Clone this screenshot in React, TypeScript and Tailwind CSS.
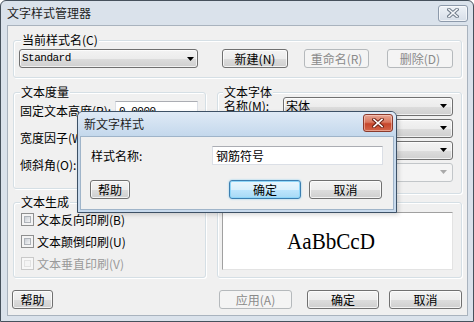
import React from "react";

type BtnProps = {
  children?: React.ReactNode;
  className?: string;
  disabled?: boolean;
  focused?: boolean;
};

function Btn({ children, className = "", disabled = false, focused = false }: BtnProps) {
  let tone =
    "border-[#707070] bg-[linear-gradient(#f3f3f3_0%,#ececec_50%,#dddddd_51%,#cfcfcf_100%)] text-black shadow-[inset_0_0_0_1px_rgba(255,255,255,0.75)]";
  if (disabled) tone = "border-[#b5b9bc] bg-[#f4f4f4] text-[#8a8a8a]";
  if (focused)
    tone =
      "border-[#3c7fb1] bg-[linear-gradient(#eaf6fd_0%,#d9f0fc_50%,#bee6fd_51%,#a7d9f5_100%)] text-black shadow-[inset_0_0_0_1px_#8fd6f8,0_0_2px_#7cc8f0]";
  return (
    <div
      className={`flex items-center justify-center rounded-[3px] border text-[12px] leading-none ${tone} ${className}`}
    >
      {children}
    </div>
  );
}

function Arrow({ disabled = false }: { disabled?: boolean }) {
  return (
    <svg width="7" height="4" viewBox="0 0 7 4" className="shrink-0">
      <path d="M0 0H7L3.5 4Z" fill={disabled ? "#a9a9a9" : "#000"} />
    </svg>
  );
}

type ComboProps = {
  text?: React.ReactNode;
  className?: string;
  disabled?: boolean;
  mono?: boolean;
};

function Combo({ text, className = "", disabled = false, mono = false }: ComboProps) {
  const tone = disabled
    ? "border-[#c2c6c9] bg-[#f4f4f4]"
    : "border-[#707070] bg-[linear-gradient(#f3f3f3_0%,#ececec_50%,#dddddd_51%,#cfcfcf_100%)] shadow-[inset_0_0_0_1px_rgba(255,255,255,0.7)]";
  return (
    <div
      className={`flex items-center justify-between rounded-[3px] border pl-[2px] ${tone} ${className}`}
    >
      <span
        className={
          mono
            ? "[font-family:'Liberation_Mono',monospace] text-[11px] tracking-[-0.5px] leading-none"
            : "leading-none"
        }
      >
        {text}
      </span>
      <Arrow disabled={disabled} />
    </div>
  );
}

function TextBox({ value = "", className = "", mono = false }: { value?: string; className?: string; mono?: boolean }) {
  return (
    <div
      className={`flex items-center bg-white border border-[#dbdfe6] border-t-[#abadb3] pl-[3px] ${className}`}
    >
      <span
        className={
          mono
            ? "[font-family:'Liberation_Mono',monospace] text-[11px] tracking-[-0.5px] leading-none"
            : "leading-none"
        }
      >
        {value}
      </span>
    </div>
  );
}

function Check({ disabled = false }: { disabled?: boolean }) {
  return (
    <div
      className={`w-[13px] h-[13px] shrink-0 border p-[2px] ${
        disabled ? "border-[#c9c9c9] bg-[#f7f7f7]" : "border-[#8e8f8f] bg-[#f4f4f4]"
      }`}
    >
      <div
        className={`w-full h-full border ${
          disabled
            ? "border-[#e2e2e2] bg-[#f4f4f4]"
            : "border-[#aeb3b9] bg-[linear-gradient(135deg,#c9ced4,#f4f5f6)]"
        }`}
      />
    </div>
  );
}

type GroupProps = {
  label?: string;
  labelPos?: string;
  className?: string;
  children?: React.ReactNode;
};

function Group({ label, labelPos = "left-[6px]", className = "", children }: GroupProps) {
  return (
    <div
      className={`relative rounded-[3px] border border-[#d5dfe5] shadow-[inset_1px_1px_0_#ffffff,1px_1px_0_#ffffff] ${className}`}
    >
      {label && (
        <span className={`absolute -top-[8px] ${labelPos} px-[1px] bg-[#f0f0f0] leading-[14px] whitespace-nowrap`}>
          {label}
        </span>
      )}
      {children}
    </div>
  );
}

function CloseGlyph({ dark, light }: { dark: string; light: string }) {
  return (
    <svg width="12" height="10" viewBox="0 0 12 10">
      <path d="M2 1.5L10 8.5M10 1.5L2 8.5" stroke={dark} strokeWidth="3.6" strokeLinecap="square" />
      <path d="M2 1.5L10 8.5M10 1.5L2 8.5" stroke={light} strokeWidth="1.6" strokeLinecap="square" />
    </svg>
  );
}

export default function App() {
  return (
    <div className="relative w-[474px] h-[322px] flex flex-col border border-[#46515c] rounded-t-[6px] bg-[#dae2eb] overflow-hidden text-[12px] text-black [font-family:'Noto_Sans_CJK_SC','Noto_Sans',sans-serif]">
      {/* Title bar */}
      <div className="h-[24px] shrink-0 flex items-center justify-between pl-[6px] pr-[5px]">
        <span className="leading-none text-[#1e1e1e]">文字样式管理器</span>
        <div className="w-[30px] h-[17px] flex items-center justify-center rounded-[3px] border border-[#8d9aab] bg-[linear-gradient(#eef2f7,#d6dee8)] shadow-[inset_0_0_0_1px_rgba(255,255,255,0.6)]">
          <CloseGlyph dark="#707c8a" light="#f4f6f9" />
        </div>
      </div>

      {/* Client area */}
      <div className="flex-1 ml-[6px] mr-[5px] mb-[5px] border border-[#a9b3be] bg-[#f0f0f0] flex flex-col">
        {/* Current style */}
        <Group label="当前样式名(C)" labelPos="left-[7px]" className="mt-[14px] mx-[5px] h-[38px] flex items-start pt-[8px] pl-[5px]">
          <Combo text="Standard" mono className="w-[179px] h-[19px] pr-[3px]" />
          <Btn className="ml-[24px] w-[66px] h-[19px]">新建(N)</Btn>
          <Btn disabled className="ml-[16px] w-[65px] h-[19px]">重命名(R)</Btn>
          <Btn disabled className="ml-[18px] w-[66px] h-[19px]">删除(D)</Btn>
        </Group>

        <div className="mt-[14px] mx-[5px] flex">
          {/* Left column */}
          <div className="w-[193px] flex flex-col">
            <Group label="文本度量" className="h-[97px] pt-[8px] pl-[6px] flex flex-col gap-[7px]">
              <div className="h-[20px] flex items-center">
                <span className="w-[95px] leading-none whitespace-nowrap">固定文本高度(R):</span>
                <TextBox value="0.0000" mono className="w-[83px] h-[20px]" />
              </div>
              <div className="h-[20px] flex items-center">
                <span className="w-[95px] leading-none whitespace-nowrap">宽度因子(W):</span>
              </div>
              <div className="h-[20px] flex items-center">
                <span className="w-[95px] leading-none whitespace-nowrap">倾斜角(O):</span>
              </div>
            </Group>
            <Group label="文本生成" className="mt-[13px] h-[76px] pt-[10px] pl-[7px] flex flex-col gap-[9px]">
              <div className="h-[13px] flex items-center gap-[3px]">
                <Check />
                <span className="leading-none">文本反向印刷(B)</span>
              </div>
              <div className="h-[13px] flex items-center gap-[3px]">
                <Check />
                <span className="leading-none">文本颠倒印刷(U)</span>
              </div>
              <div className="h-[13px] flex items-center gap-[3px]">
                <Check disabled />
                <span className="leading-none text-[#9a9a9a]">文本垂直印刷(V)</span>
              </div>
            </Group>
          </div>

          {/* Right column */}
          <div className="ml-[11px] w-[245px] flex flex-col">
            <Group label="文本字体" labelPos="left-[5px]" className="h-[102px] pt-[4px] pl-[6px] flex flex-col gap-[4px]">
              <div className="h-[18px] flex items-center">
                <span className="w-[59px] leading-none whitespace-nowrap">名称(M):</span>
                <Combo text="宋体" className="w-[170px] h-[19px] pr-[5px]" />
              </div>
              <div className="h-[18px] flex items-center">
                <span className="w-[59px]" />
                <Combo className="w-[170px] h-[19px] pr-[5px]" />
              </div>
              <div className="h-[18px] flex items-center">
                <span className="w-[59px]" />
                <Combo className="w-[170px] h-[19px] pr-[5px]" />
              </div>
              <div className="h-[18px] flex items-center">
                <span className="w-[59px]" />
                <Combo disabled className="w-[170px] h-[19px] pr-[5px]" />
              </div>
            </Group>
            <Group className="mt-[8px] h-[76px] pt-[9px] pl-[4px]">
              <div className="w-[231px] h-[58px] bg-white border border-[#a0a0a0] border-r-[#e3e3e3] border-b-[#e3e3e3] flex items-center justify-center">
                <span className="[font-family:'Liberation_Serif',serif] text-[24px] leading-none scale-x-[0.88] -ml-[14px]">
                  AaBbCcD
                </span>
              </div>
            </Group>
          </div>
        </div>

        {/* Bottom buttons */}
        <div className="mt-[12px] flex items-start">
          <Btn className="ml-[4px] w-[41px] h-[19px]">帮助</Btn>
          <div className="ml-auto mr-[5px] flex">
            <Btn disabled className="w-[73px] h-[19px]">应用(A)</Btn>
            <Btn className="ml-[15px] w-[72px] h-[19px]">确定</Btn>
            <Btn className="ml-[10px] w-[73px] h-[19px]">取消</Btn>
          </div>
        </div>
      </div>

      {/* Modal: 新文字样式 */}
      <div className="absolute left-[76px] top-[110px] w-[320px] h-[102px] flex flex-col border border-[#3d5166] rounded-t-[6px] bg-[#c8daed] shadow-[2px_2px_4px_rgba(0,0,0,0.15)]">
        <div className="h-[24px] shrink-0 flex items-start justify-between pl-[6px] pr-[3px] rounded-t-[5px] bg-[linear-gradient(#dfeaf6,#c4d8ec)]">
          <span className="mt-[6px] leading-none text-[#1e1e1e]">新文字样式</span>
          <div className="mt-[2px] w-[30px] h-[18px] flex items-center justify-center rounded-[3px] border border-[#8a3a2c] bg-[linear-gradient(#e7a493_0%,#d9785f_45%,#c6452b_55%,#d3664a_100%)] shadow-[inset_0_0_0_1px_rgba(255,220,210,0.5)]">
            <CloseGlyph dark="#6e2418" light="#ffffff" />
          </div>
        </div>
        <div className="flex-1 mx-[2px] mb-[2px] border border-[#9fb4c9] bg-[#f0f0f0] flex flex-col">
          <div className="mt-[9px] pl-[10px] h-[19px] flex items-center">
            <span className="w-[121px] leading-none">样式名称:</span>
            <TextBox value="钢筋符号" className="w-[171px] h-[19px]" />
          </div>
          <div className="mt-[15px] pl-[9px] flex">
            <Btn className="w-[40px] h-[19px]">帮助</Btn>
            <Btn focused className="ml-[99px] w-[72px] h-[19px]">确定</Btn>
            <Btn className="ml-[8px] w-[73px] h-[19px]">取消</Btn>
          </div>
        </div>
      </div>
    </div>
  );
}
